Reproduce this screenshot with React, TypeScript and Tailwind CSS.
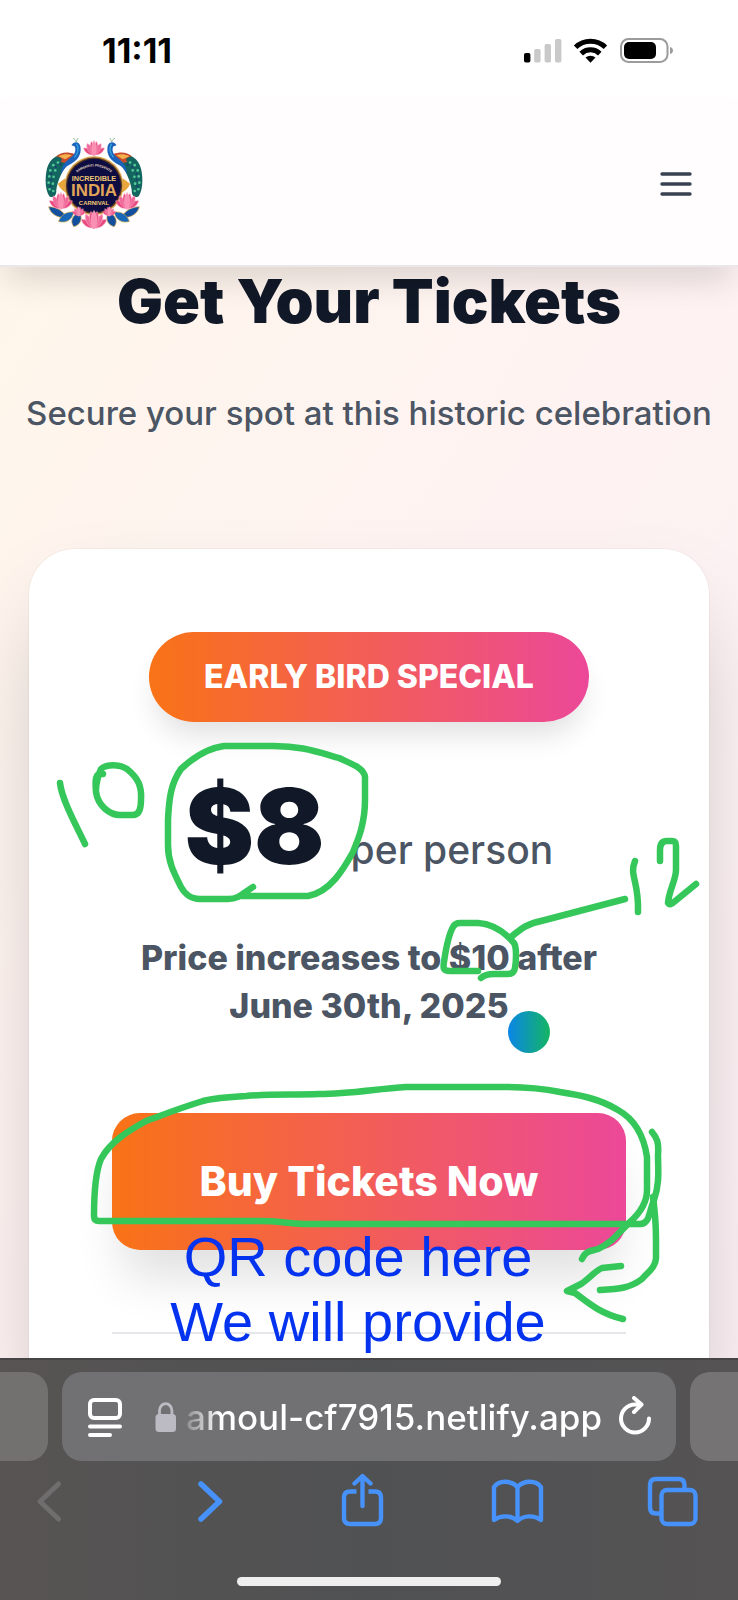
import React from "react";

function StatusBar() {
  return (
    <div className="flex h-[98px] shrink-0 items-center justify-between bg-white pl-[102px] pr-[64px] pt-[3px] text-black">
      <span className="text-[34px] font-bold leading-[36px]">11:11</span>
      <svg className="h-[28px] w-[150px]" viewBox="524 36 150 28" role="img" aria-label="Signal, Wi-Fi and battery">
        <rect x="524" y="52" width="6.4" height="9.6" rx="1.8" />
        <g fill="#c9c9c9">
          <rect x="534.2" y="48" width="6.4" height="13.6" rx="1.8" />
          <rect x="544.6" y="43" width="6.4" height="18.6" rx="1.8" />
          <rect x="555" y="38" width="6.4" height="23.6" rx="1.8" />
        </g>
        <g fill="none" stroke="#000" strokeWidth="5">
          <path d="M575.6 46.2a21.4 21.4 0 0 1 29.8 0" />
          <path d="M581.2 52.6a13.4 13.4 0 0 1 18.6 0" />
        </g>
        <path d="M590.5 61.8l-5-5.2a7.4 7.4 0 0 1 10 0z" />
        <rect x="621" y="38" width="46.5" height="23" rx="7.5" fill="none" stroke="#9b9b9b" strokeWidth="2" />
        <rect x="624" y="41" width="32" height="17" rx="5" />
        <path d="M670 46v7c4-1 4-6 0-7z" fill="#9b9b9b" />
      </svg>
    </div>
  );
}

function Lotus({ x, y, s }: { x: number; y: number; s: number }) {
  return (
    <g transform={`translate(${x} ${y}) scale(${s})`}>
      <g fill="#e8497f" stroke="#f9a9c4" strokeWidth="1.5">
        <path d="M0 18C-16 20-30 10-33-4C-20-6-6 4 0 18z" />
        <path d="M0 18C16 20 30 10 33-4C20-6 6 4 0 18z" />
        <path d="M0 20C-18 12-26-4-22-18C-10-14-2 2 0 20z" fill="#f0699a" />
        <path d="M0 20C18 12 26-4 22-18C10-14 2 2 0 20z" fill="#f0699a" />
        <path d="M0 20C-13 8-15-12-8-25C0-16 2 4 0 20z" />
        <path d="M0 20C13 8 15-12 8-25C0-16-2 4 0 20z" />
        <path d="M0 20C-11 8-10-14 0-28C10-14 11 8 0 20z" fill="#fa8fb3" />
      </g>
    </g>
  );
}

function Peacock() {
  return (
    <g>
      <path d="M104 96C70 98 52 118 47 150C42 182 46 208 56 224C70 232 78 220 77 206C80 180 92 150 116 122z" fill="#12665f" />
      <g fill="#55c79a">
        <circle cx="68" cy="130" r="4" /><circle cx="82" cy="122" r="4" /><circle cx="59" cy="146" r="4" />
        <circle cx="74" cy="146" r="4" /><circle cx="56" cy="164" r="4" /><circle cx="69" cy="165" r="4" />
        <circle cx="54" cy="183" r="4" /><circle cx="67" cy="186" r="4" /><circle cx="57" cy="203" r="4" />
        <circle cx="68" cy="208" r="4" />
      </g>
      <g fill="#1d3a78">
        <circle cx="75" cy="136" r="3" /><circle cx="62" cy="156" r="3" /><circle cx="61" cy="174" r="3" />
        <circle cx="60" cy="194" r="3" /><circle cx="90" cy="128" r="3" />
      </g>
      <path d="M82 186C86 196 92 204 108 214L104 170z" fill="#e9a63b" />
      <path d="M76 104C92 88 114 90 132 96C128 118 106 128 90 120C98 112 92 106 76 104z" fill="#c84a2c" />
      <path d="M84 103C100 95 114 96 124 100L104 112z" fill="#f4b04a" />
      <path d="M123 70C130 56 147 58 150 74C154 98 142 118 114 130C104 136 98 144 92 156C90 134 106 118 122 106C135 96 137 84 133 74z" fill="#1b62bd" />
      <path d="M138 66C146 78 144 94 132 106" fill="none" stroke="#35a4dc" strokeWidth="4" />
      <path d="M137 60C136 54 132 51 128 49M138 60C139 54 142 50 143 48" fill="none" stroke="#8fb58f" strokeWidth="3" />
      <path d="M104 280C88 262 72 256 54 256C60 278 80 290 104 288z" fill="#124f9e" stroke="#dba845" strokeWidth="2" />
      <path d="M130 272C108 268 90 282 84 300C104 306 124 298 130 272z" fill="#1768b8" stroke="#dba845" strokeWidth="2" />
      <path d="M146 270C128 282 116 298 130 316C152 310 158 290 146 270z" fill="#124f9e" stroke="#dba845" strokeWidth="2" />
    </g>
  );
}

function Logo() {
  return (
    <svg className="h-[96px] w-[98px]" viewBox="43 42 296 290" role="img" aria-label="Incredible India Carnival">
      <Peacock />
      <g transform="translate(382 0) scale(-1 1)">
        <Peacock />
      </g>
      <circle cx="191" cy="192" r="89" fill="#d9a44c" />
      <circle cx="191" cy="192" r="85" fill="#5a3a22" />
      <circle cx="191" cy="192" r="81" fill="#0d0d42" />
      <Lotus x={191} y={82} s={0.95} />
      <Lotus x={91} y={242} s={1.05} />
      <Lotus x={291} y={242} s={1.05} />
      <Lotus x={145} y={272} s={0.6} />
      <Lotus x={237} y={272} s={0.6} />
      <Lotus x={191} y={299} s={1.15} />
      <path id="crest-arc" d="M130 160Q191 108 252 160" fill="none" />
      <g textAnchor="middle" fontFamily="'Liberation Sans', Arial, sans-serif" fontWeight="700">
        <text fill="#e8d9c0" fontSize="10">
          <textPath href="#crest-arc" startOffset="50%">SAMSKRITI PRESENTS</textPath>
        </text>
        <text x="191" y="178" fontSize="22" fill="#f0c873">INCREDIBLE</text>
        <text x="191" y="224" fontSize="51" fill="#e2a558">INDIA</text>
        <text x="191" y="250" fontSize="18" fill="#f0c873">CARNIVAL</text>
      </g>
    </svg>
  );
}

function SiteHeader() {
  return (
    <header className="relative z-10 flex h-[169px] shrink-0 items-center justify-between border-b-2 border-[#e9e7e9] bg-[#fffdfe] px-[45px] pt-1 shadow-[0_20px_30px_-6px_rgba(0,0,0,0.13)]">
      <Logo />
      <button type="button" aria-label="Menu" className="flex h-12 w-[34px] items-center">
        <svg className="h-8 w-[34px]" viewBox="0 0 34 32" stroke="#374151" strokeWidth="3.4" strokeLinecap="round">
          <path d="M3 6h28M3 16h28M3 26h28" />
        </svg>
      </button>
    </header>
  );
}

function Notes() {
  return (
    <>
      <div className="absolute left-[508px] top-[744px] size-[42px] rounded-full bg-linear-to-r/srgb from-[#0a86e8] to-[#14b562]" />
      <p className="absolute left-[358px] top-[957px] -translate-x-1/2 whitespace-nowrap text-center font-['Liberation_Sans',Arial,sans-serif] text-[56px] leading-[65px] text-[#0433f0]">
        QR code here
        <br />
        We will provide
      </p>
      <svg
        className="pointer-events-none absolute left-0 top-0 h-[1091px] w-[738px]"
        viewBox="0 267 738 1091"
        fill="none"
        stroke="#35c75a"
        strokeWidth="6.5"
        strokeLinecap="round"
        strokeLinejoin="round"
        aria-hidden="true"
      >
        <path d="M60 783C62 800 76 825 85 844" />
        <path d="M103 774C95 772 95 780 96 792C98 806 110 815 120 815H133C139 815 141 808 141 800C142 786 138 778 127 769C119 764 106 764 101 769C98 775 96 785 96 790" />
        <path d="M253 887C244 892 240 899 228 899H200C190 899 185 894 181 887C174 873 168 862 168 845V820C169 798 171 783 181 769C195 756 208 748 224 746H268C300 745 318 752 339 758C352 764 364 768 365 777V800C365 825 357 842 353 852C343 870 330 892 308 896H242" />
        <path d="M635 861C629 876 639 880 638 912" />
        <path d="M660 861V850Q660 841 667 841H672Q676 841 676 846V870C676 880 669 890 668 903Q670 906 674 902L696 884" />
        <path d="M625 899L545 920C527 924 523 927 511 937" />
        <path d="M478 971H450C443 971 443 968 444 962C446 948 449 934 453 927Q455 923 460 923H478C492 924 503 930 514 943C517 948 516 962 515 968Q514 974 508 974H494C488 974 484 975 481 978" />
        <path d="M582 1259C586 1250 592 1251 598 1249C612 1243 619 1232 630 1222C640 1213 647 1202 647 1190V1157C644 1137 636 1120 618 1110C600 1099 580 1095 560 1092C540 1088 520 1087 505 1087H406C375 1089 350 1094 319 1094C295 1095 270 1094 246 1096C228 1097 215 1098 203 1101C180 1108 165 1114 146 1121C128 1131 110 1142 101 1159C95 1173 94 1195 94 1216Q94 1221 99 1221H260C280 1221 290 1224 311 1224H640C650 1224 649 1211 654 1200C660 1183 658 1168 658 1155C659 1142 657 1138 652 1132" />
        <path d="M653 1197C655 1212 656 1225 656 1240V1258C656 1267 648 1272 642 1279C630 1288 620 1289 600 1290" />
        <path d="M621 1266L602 1268C596 1270 590 1278 581 1284L567 1291L575 1293C585 1300 598 1313 623 1319" />
      </svg>
    </>
  );
}

function Tickets() {
  return (
    <main className="relative min-h-0 flex-1 overflow-hidden bg-linear-to-br/srgb from-[#fff6eb] via-[#fef3f1] via-40% to-[#fcf0f5] px-[29px] pt-1">
      <h1 className="text-center text-[61px] font-black leading-[60px] text-[#111827]">Get Your Tickets</h1>
      <p className="mt-[58px] text-center text-[33px] font-medium leading-[48px] text-[#4b5563]">
        <span className="-mx-4 inline-block whitespace-nowrap">Secure your spot at this historic celebration</span>
      </p>
      <section className="mt-[112px] flex flex-col items-center rounded-[46px] bg-white px-[83px] pb-[83px] pt-[83px] shadow-[0_0_0_1px_rgba(0,0,0,0.03),0_48px_96px_-23px_rgba(0,0,0,0.25)]">
        <div className="flex h-[90px] items-center rounded-full bg-linear-to-r/srgb from-[#f97316] to-[#ec4899] px-[55px] text-[32px] font-extrabold text-white shadow-[0_19px_29px_-6px_rgba(0,0,0,0.12)]">
          EARLY BIRD SPECIAL
        </div>
        <div className="mt-[52px] flex items-baseline gap-[26px]">
          <span className="text-[104px] font-black leading-[104px] text-[#111827]">$8</span>
          <span className="text-[39px] font-medium leading-[48px] text-[#4b5563]">per person</span>
        </div>
        <p className="mt-[56px] text-center text-[34px] font-extrabold leading-[48px] text-[#4b5563]">
          Price increases to $10 after
          <br />
          June 30th, 2025
        </p>
        <button
          type="button"
          className="mt-[83px] h-[137px] w-full rounded-[28px] bg-linear-to-r/srgb from-[#f97316] to-[#ec4899] text-[41px] font-extrabold text-white shadow-[0_38px_48px_-10px_rgba(0,0,0,0.12)]"
        >
          Buy Tickets Now
        </button>
        <hr className="mt-[82px] w-full border-t-2 border-[#e5e7eb]" />
      </section>
      <Notes />
    </main>
  );
}

const toolIcon = "h-[56px] w-[56px]";

function BrowserBar() {
  return (
    <footer className="relative z-10 shrink-0 border-t-2 border-[#464445] bg-linear-to-r from-[#575453] via-[#505153] to-[#555354] pt-3 text-white">
      <div className="flex h-[89px] gap-[14px]">
        <div className="w-[48px] rounded-r-[20px] bg-[#737170]" />
        <div className="flex min-w-0 flex-1 items-center rounded-[20px] bg-[#717173] pl-[24px] pr-[22px]">
          <button type="button" aria-label="Page settings">
            <svg className="h-[40px] w-[38px]" viewBox="86 1396 38 40" fill="none" stroke="#fff" strokeWidth="4" strokeLinecap="round">
              <rect x="90" y="1399" width="30" height="18" rx="4" />
              <path d="M90 1425.5h30M90 1434h20" />
            </svg>
          </button>
          <svg className="ml-[30px] h-[32px] w-[24px] shrink-0" viewBox="154 1400 24 32" aria-hidden="true">
            <rect x="155.5" y="1413" width="20.5" height="18" rx="3.5" fill="#bcbac2" />
            <path d="M159.5 1414v-4.5a6.2 6.8 0 0 1 12.4 0v4.5" fill="none" stroke="#bcbac2" strokeWidth="2.8" />
          </svg>
          <span className="ml-2 flex-1 whitespace-nowrap bg-linear-to-r from-white/20 via-white via-[8%] to-white bg-clip-text text-[35px] font-medium leading-[48px] text-transparent">
            amoul-cf7915.netlify.app
          </span>
          <button type="button" aria-label="Reload">
            <svg className="h-[42px] w-[36px]" viewBox="618 1395 36 42" fill="none" stroke="#fff" strokeWidth="4" strokeLinecap="round" strokeLinejoin="round">
              <path d="M641 1403.5H635a14 14 0 1 0 14 14" />
              <path d="M634 1397l7.5 6.5l-7.5 7.5" />
            </svg>
          </button>
        </div>
        <div className="w-[48px] rounded-l-[20px] bg-[#757373]" />
      </div>
      <nav className="flex h-[80px] items-center justify-between pl-[22px] pr-[37px]">
        <button type="button" aria-label="Back" disabled>
          <svg className={toolIcon} viewBox="22 1473 56 56" fill="none" stroke="#6f6d6e" strokeWidth="5" strokeLinecap="round" strokeLinejoin="round">
            <path d="M58.5 1484L40 1501.5L58.5 1519" />
          </svg>
        </button>
        <button type="button" aria-label="Forward">
          <svg className={toolIcon} viewBox="178 1473 56 56" fill="none" stroke="#4692fa" strokeWidth="5.5" strokeLinecap="round" strokeLinejoin="round">
            <path d="M201 1484L219.5 1501.5L201 1519" />
          </svg>
        </button>
        <button type="button" aria-label="Share">
          <svg className={toolIcon} viewBox="334 1473 56 56" fill="none" stroke="#4692fa" strokeWidth="4.4" strokeLinecap="round" strokeLinejoin="round">
            <path d="M362.5 1506v-29M354.5 1483.5l8-7.5l8 7.5" />
            <path strokeLinecap="butt" d="M356.5 1491.5H350q-6 0-6 6V1518q0 6 6 6h25q6 0 6-6v-20.5q0-6-6-6h-6.5" />
          </svg>
        </button>
        <button type="button" aria-label="Bookmarks">
          <svg className={toolIcon} viewBox="489 1473 56 56" fill="none" stroke="#4692fa" strokeWidth="4.4" strokeLinecap="round" strokeLinejoin="round">
            <path d="M517.5 1487C511 1480 499 1480 494 1487V1520C501 1515 511 1515 517.5 1521C524 1515 534 1515 541 1520V1487C536 1480 524 1480 517.5 1487zV1520" />
          </svg>
        </button>
        <button type="button" aria-label="Tabs">
          <svg className={toolIcon} viewBox="645 1473 56 56" fill="none" stroke="#4692fa" strokeWidth="4.4" strokeLinejoin="round">
            <rect x="661.5" y="1490" width="34" height="34" rx="5.5" />
            <path d="M660 1513.5h-4q-6 0-6-6V1485q0-6 6-6h22.5q6 0 6 6v4" />
          </svg>
        </button>
      </nav>
      <div className="flex justify-center pb-[14px] pt-[36px]">
        <div className="h-[9px] w-[264px] rounded-full bg-[#efefef]" />
      </div>
    </footer>
  );
}

export default function App() {
  return (
    <div className="flex h-screen flex-col overflow-hidden bg-white font-['Inter','Liberation_Sans',sans-serif]">
      <StatusBar />
      <SiteHeader />
      <Tickets />
      <BrowserBar />
    </div>
  );
}
